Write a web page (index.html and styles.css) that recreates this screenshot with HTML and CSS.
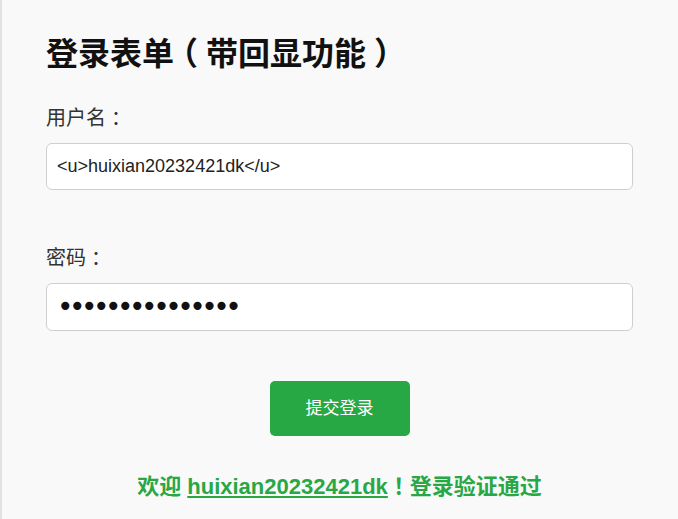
FILE: index.html
```html
<!DOCTYPE html>
<html lang="zh-CN">
<head>
    <meta charset="UTF-8">
    <meta name="viewport" content="width=device-width, initial-scale=1.0">
    <title>登录表单（带回显功能）</title>
    <link rel="stylesheet" href="styles.css">
</head>
<body>
    <div class="container">
        <h1>登录表单<span class="punct">（</span>带回显功能<span class="punct">）</span></h1>
        <form id="formLogin" method="POST">
            <div class="form-group">
                <label for="username">用户名<span class="punct">：</span></label>
                <input type="text" id="username" name="username" value="<u>huixian20232421dk</u>">
            </div>

            <div class="form-group last">
                <label for="password">密码<span class="punct">：</span></label>
                <input type="password" id="password" name="password" value="abcdefghijklmno">
            </div>

            <div class="actions">
                <button type="submit">提交登录</button>
            </div>
        </form>
        <!-- Mensagem de retorno -->
        <p class="welcome">欢迎 <u>huixian20232421dk</u><span class="punct">！</span>登录验证通过</p>
    </div>
</body>
</html>
```

FILE: styles.css
```css
/* Estilos da pagina */
body {
    font-family: "Liberation Sans", Arial, "Noto Sans CJK SC", sans-serif;
    margin: 0;
    padding: 0;
    background-color: #f9f9f9;
}

.container {
    border-left: 2px solid #e2e2e2;
    padding: 32px 45px 0 44px;
    min-height: 519px;
    box-sizing: border-box;
}

/* pontuacao centralizada na celula */
.punct {
    display: inline-block;
    width: 1em;
    text-align: center;
    font-feature-settings: "halt";
}

h1 {
    font-size: 32px;
    line-height: 1.4;
    color: #111;
    margin: 0 0 28px 0;
}

.form-group {
    margin-bottom: 55px;
}

.form-group.last {
    margin-bottom: 50px;
}

label {
    display: block;
    font-size: 20px;
    line-height: 26px;
    color: #333;
    margin-bottom: 12px;
}

input {
    display: block;
    width: 100%;
    height: 47px;
    box-sizing: border-box;
    padding: 0 10px;
    font-family: inherit;
    font-size: 18px;
    color: #222;
    background: #fff;
    border: 1px solid #cfcfcf;
    border-radius: 6px;
}

input[type="password"] {
    height: 48px;
    font-family: "DejaVu Sans", sans-serif;
    font-size: 28px;
    letter-spacing: -4.5px;
    color: #111;
}

.actions {
    text-align: center;
}

button {
    background-color: #28a745;
    color: #fff;
    font-family: inherit;
    font-size: 17px;
    line-height: 23px;
    padding: 16px 36px;
    border: none;
    border-radius: 5px;
    cursor: pointer;
}

.welcome {
    margin: 36px 0 0 0;
    text-align: center;
    font-size: 22px;
    line-height: 1.4;
    font-weight: bold;
    color: #28a745;
}
```
